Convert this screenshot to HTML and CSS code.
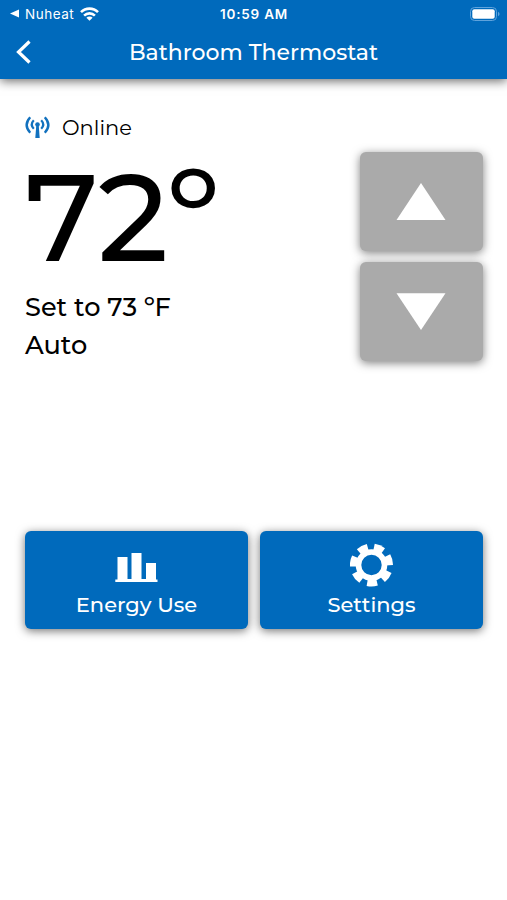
FILE: index.html
```html
<!DOCTYPE html>
<html lang="en">
<head>
    <meta charset="UTF-8">
    <meta name="viewport" content="width=device-width, initial-scale=1.0">
    <title>Bathroom Thermostat</title>
    <link rel="stylesheet" href="styles.css">
</head>
<body>
    <header class="header">
        <div class="status-bar">
            <div class="status-left">
                <svg width="9" height="9" viewBox="0 0 9 9"><path d="M0 4.5 9 0.5v8z" fill="#fff"/></svg>
                <span class="carrier">Nuheat</span>
                <svg class="wifi" width="19" height="14" viewBox="0 0 19 14" fill="none" stroke="#fff" stroke-width="2.6">
                    <path d="M1 5.2a12 12 0 0 1 17 0"/>
                    <path d="M4.1 8.6a7.7 7.7 0 0 1 10.8 0"/>
                    <path d="M9.5 13.8 6.4 10.8a4.3 4.3 0 0 1 6.2 0z" fill="#fff" stroke="none"/>
                </svg>
            </div>
            <span class="time">10:59 AM</span>
            <svg class="battery" width="30" height="14" viewBox="0 0 30 14">
                <rect x="0.5" y="0.5" width="26" height="13" rx="4" fill="none" stroke="#5fa3dc"/>
                <rect x="2.3" y="2.3" width="22.4" height="9.4" rx="2" fill="#fff"/>
                <path d="M28 4.7v4.6q1.6-.8 1.6-2.3t-1.6-2.3z" fill="#5fa3dc"/>
            </svg>
        </div>
        <div class="nav-bar">
            <svg width="15" height="24" viewBox="0 0 15 24" fill="none" stroke="#fff" stroke-width="3.2">
                <path d="M13.5 1.5 2.5 12l11 10.5"/>
            </svg>
            <h1 class="title">Bathroom Thermostat</h1>
        </div>
    </header>

    <main class="content">
        <section class="thermostat">
            <div class="readings">
                <div class="connection">
                    <svg width="25" height="23" viewBox="0 0 25 23" fill="none" stroke="#1271be" stroke-width="2.4">
                        <path d="M5.2 1.2Q-1.9 9 5.2 16.8M19.8 1.2Q26.9 9 19.8 16.8"/>
                        <path d="M8.8 4.2Q4.7 8.5 8.8 12.8M16.2 4.2Q20.3 8.5 16.2 12.8" stroke-width="2.2"/>
                        <circle cx="12.5" cy="8.5" r="2.3" fill="#1271be" stroke="none"/>
                        <path d="M11.3 9h2.4l1 13h-4.4z" fill="#1271be" stroke="none"/>
                    </svg>
                    <span class="online">Online</span>
                </div>
                <div class="temperature">72º</div>
                <div class="setpoint">Set to 73 ºF</div>
                <div class="mode">Auto</div>
            </div>
            <div class="controls">
                <button class="step" aria-label="Raise temperature">
                    <svg width="51" height="38" viewBox="0 0 51 38"><path d="M25 0 49.5 37H.5z" fill="#fff"/></svg>
                </button>
                <button class="step" aria-label="Lower temperature">
                    <svg width="51" height="38" viewBox="0 0 51 38"><path d="M25 37 49.5 .3H.5z" fill="#fff"/></svg>
                </button>
            </div>
        </section>

        <nav class="actions">
            <button class="action">
                <svg width="44" height="44" viewBox="0 0 44 44" fill="#fff">
                    <path d="M2.5 14h10v22h4V10h10v26h4.500V20h10v16.500h1.500V39H.3v-2.500h2.200z"/>
                </svg>
                <span>Energy Use</span>
            </button>
            <button class="action">
                <svg width="44" height="44" viewBox="-21.5 -22 44 44">
                    <defs>
                        <path id="tooth" d="M-4 13-5.6 20.8Q0 22.4 5.6 20.8L4 13z"/>
                    </defs>
                    <circle r="13" fill="none" stroke="#fff" stroke-width="5.6"/>
                    <g fill="#fff" transform="rotate(-2)">
                        <use href="#tooth"/>
                        <use href="#tooth" transform="rotate(51.43)"/>
                        <use href="#tooth" transform="rotate(102.86)"/>
                        <use href="#tooth" transform="rotate(154.29)"/>
                        <use href="#tooth" transform="rotate(205.71)"/>
                        <use href="#tooth" transform="rotate(257.14)"/>
                        <use href="#tooth" transform="rotate(308.57)"/>
                    </g>
                </svg>
                <span>Settings</span>
            </button>
        </nav>
    </main>
</body>
</html>
```
FILE: styles.css
```css
* {
    box-sizing: border-box;
}
body {
    margin: 0;
    height: 900px;
    background: #fff;
    color: #000;
    font-family: Montserrat, Inter, sans-serif;
    overflow: hidden;
}
svg {
    display: block;
    flex: none;
}
button {
    border: 0;
    padding: 0;
    font: inherit;
    cursor: pointer;
}
.header {
    height: 79px;
    background: #006abc;
    color: #fff;
    box-shadow: 0 2px 10px rgba(0, 0, 0, 0.6);
}
.status-bar {
    height: 27px;
    padding: 0 7px 0 10px;
    display: grid;
    grid-template-columns: 1fr auto 1fr;
    align-items: center;
    font-family: Inter, sans-serif;
    font-size: 13.5px;
}
.status-left {
    display: flex;
    align-items: center;
}
.carrier {
    width: 50px;
    margin-left: 6px;
    letter-spacing: 0.5px;
}
.wifi {
    margin-left: 5px;
}
.time {
    margin-right: 2px;
    font-weight: 600;
    letter-spacing: 0.8px;
}
.battery {
    justify-self: end;
}
.nav-bar {
    height: 50px;
    padding: 0 16px;
    display: grid;
    grid-template-columns: 15px 1fr 15px;
    align-items: center;
}
.title {
    margin: 0;
    text-align: center;
    font-size: 22px;
    font-weight: 500;
    white-space: nowrap;
}
.content {
    padding: 37px 24px 0 25px;
}
.thermostat {
    height: 415px;
    display: flex;
    justify-content: space-between;
}
.connection {
    height: 23px;
    display: flex;
    align-items: center;
    gap: 12px;
}
.online {
    font-size: 21px;
}
.temperature {
    height: 149px;
    line-height: 157px;
    font-size: 123px;
    font-weight: 500;
    letter-spacing: -0.8px;
    white-space: nowrap;
}
.setpoint,
.mode {
    height: 38px;
    line-height: 38px;
    font-size: 25.6px;
    font-weight: 500;
}
.controls {
    padding-top: 36px;
    display: flex;
    flex-direction: column;
    gap: 11px;
}
.step {
    width: 123px;
    height: 99px;
    display: flex;
    align-items: center;
    justify-content: center;
    background: #aaa;
    border-radius: 6px;
    box-shadow: 0 2px 10px rgba(0, 0, 0, 0.5);
}
.actions {
    display: grid;
    grid-template-columns: 1fr 1fr;
    gap: 12px;
}
.action {
    height: 98px;
    padding-top: 12px;
    display: flex;
    flex-direction: column;
    align-items: center;
    background: #006abc;
    color: #fff;
    font-size: 21px;
    font-weight: 500;
    line-height: 36px;
    border-radius: 6px;
    box-shadow: 0 2px 10px rgba(0, 0, 0, 0.55);
}
```
